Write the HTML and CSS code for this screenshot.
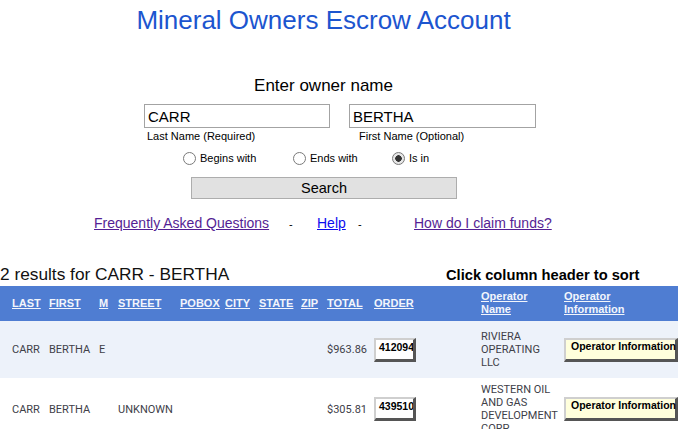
FILE: index.html
```html
<!DOCTYPE html>
<html lang="en">
<head>
  <meta charset="UTF-8">
  <meta name="viewport" content="width=device-width, initial-scale=1.0">
  <title>Mineral Owners Escrow Account</title>
  <link rel="stylesheet" href="styles.css">
</head>
<body>
  <div class="search">
    <h1 class="title">Mineral Owners Escrow Account</h1>
    <p class="prompt">Enter owner name</p>

    <div class="fields">
      <div class="field">
        <input type="text" class="name-input" value="CARR">
        <label class="hint">Last Name (Required)</label>
      </div>
      <div class="field field-first">
        <input type="text" class="name-input" value="BERTHA">
        <label class="hint">First Name (Optional)</label>
      </div>
    </div>

    <div class="modes">
      <label class="mode"><input type="radio" name="mode"> Begins with</label>
      <label class="mode"><input type="radio" name="mode"> Ends with</label>
      <label class="mode"><input type="radio" name="mode" checked> Is in</label>
    </div>

    <button class="search-btn">Search</button>

    <div class="links">
      <a href="#" class="visited">Frequently Asked Questions</a>
      <span class="dash">-</span>
      <a href="#" class="fresh">Help</a>
      <span class="dash">-</span>
      <a href="#" class="visited">How do I claim funds?</a>
    </div>
  </div>

  <div class="results-head">
    <span class="count">2 results for CARR - BERTHA</span>
    <span class="sort-note">Click column header to sort</span>
  </div>

  <table class="results">
    <colgroup>
      <col style="width:43px"><col style="width:50px"><col style="width:19px">
      <col style="width:62px"><col style="width:45px"><col style="width:34px">
      <col style="width:42px"><col style="width:26px"><col style="width:47px">
      <col style="width:107px"><col style="width:83px"><col style="width:142px">
    </colgroup>
    <thead>
      <tr>
        <th><a href="#">LAST</a></th>
        <th><a href="#">FIRST</a></th>
        <th><a href="#">M</a></th>
        <th><a href="#">STREET</a></th>
        <th><a href="#">POBOX</a></th>
        <th><a href="#">CITY</a></th>
        <th><a href="#">STATE</a></th>
        <th><a href="#">ZIP</a></th>
        <th><a href="#">TOTAL</a></th>
        <th><a href="#">ORDER</a></th>
        <th><a href="#">Operator<br>Name</a></th>
        <th><a href="#">Operator<br>Information</a></th>
      </tr>
    </thead>
    <tbody>
      <tr class="odd">
        <td>CARR</td>
        <td>BERTHA</td>
        <td>E</td>
        <td></td>
        <td></td>
        <td></td>
        <td></td>
        <td></td>
        <td>$963.86</td>
        <td><span class="order">412094</span></td>
        <td>RIVIERA<br>OPERATING<br>LLC</td>
        <td><span class="op-btn">Operator Information</span></td>
      </tr>
      <tr>
        <td>CARR</td>
        <td>BERTHA</td>
        <td></td>
        <td>UNKNOWN</td>
        <td></td>
        <td></td>
        <td></td>
        <td></td>
        <td>$305.81</td>
        <td><span class="order">439510</span></td>
        <td>WESTERN OIL<br>AND GAS<br>DEVELOPMENT<br>CORP</td>
        <td><span class="op-btn">Operator Information</span></td>
      </tr>
    </tbody>
  </table>
</body>
</html>
```

FILE: styles.css
```css
/* General Styles */
html {
  overflow: hidden;
}

body {
  font-family: 'Liberation Sans', Arial, sans-serif;
  margin: 0;
  padding: 0;
  background: #fff;
  color: #000;
}

/* Search Form */
.search {
  width: 647px;
}

.title {
  margin: 0;
  padding-top: 5px;
  font-size: 26px;
  line-height: 30px;
  font-weight: normal;
  color: #1c55cf;
  text-align: center;
}

.prompt {
  margin: 41px 0 0;
  font-size: 17px;
  line-height: 20px;
  text-align: center;
}

.fields {
  display: flex;
  gap: 19px;
  margin-top: 8px;
  padding-left: 144px;
}

.field {
  display: flex;
  flex-direction: column;
}

.name-input {
  box-sizing: border-box;
  width: 186px;
  height: 24px;
  margin: 0;
  padding: 0 3px;
  border: 1px solid #a3a3a3;
  font-family: 'Liberation Sans', Arial, sans-serif;
  font-size: 15px;
  color: #000;
}

.field-first .name-input {
  width: 187px;
}

.hint {
  margin-top: 2px;
  padding-left: 3px;
  font-size: 11px;
  line-height: 13px;
}

.field-first .hint {
  padding-left: 10px;
}

.modes {
  display: grid;
  grid-template-columns: 110px 99px auto;
  align-items: center;
  height: 16px;
  margin-top: 7px;
  padding-left: 183px;
  font-size: 11px;
}

.mode {
  display: flex;
  align-items: center;
  gap: 4px;
}

.mode input {
  appearance: none;
  box-sizing: border-box;
  width: 13px;
  height: 13px;
  margin: 0;
  border: 1px solid #7a7a7a;
  border-radius: 50%;
  background: #fff;
}

.mode input:checked {
  background: radial-gradient(circle, #333 0 3px, #e6e6e6 3.5px);
}

.search-btn {
  display: block;
  box-sizing: border-box;
  width: 266px;
  height: 22px;
  margin: 11px 0 0 191px;
  padding: 0;
  border: 1px solid #adadad;
  background: #e1e1e1;
  font-family: 'Liberation Sans', Arial, sans-serif;
  font-size: 14.5px;
  color: #000;
}

.links {
  display: grid;
  grid-template-columns: 195px 28px 41px 56px auto;
  margin-top: 16px;
  padding-left: 94px;
  font-size: 14px;
  line-height: 16px;
}

.links a.visited {
  color: #541e94;
}

.links a.fresh {
  color: #0b0bef;
}

.dash {
  font-size: 11px;
  align-self: end;
  line-height: 14px;
}

/* Results */
.results-head {
  display: grid;
  grid-template-columns: 446px auto;
  align-items: baseline;
  height: 20px;
  margin-top: 33px;
  line-height: 20px;
}

.count {
  font-size: 17.3px;
  color: #111;
}

.sort-note {
  font-size: 14.7px;
  font-weight: bold;
}

.results {
  width: 700px;
  margin-top: 2px;
  table-layout: fixed;
  border-collapse: collapse;
  font-size: 11px;
  line-height: 13px;
}

.results th {
  padding: 4px 0 5px 6px;
  background: #4f7dd2;
  text-align: left;
  vertical-align: middle;
}

.results th:first-child,
.results td:first-child {
  padding-left: 12px;
}

.results th a {
  color: #f2f5fc;
  font-weight: bold;
}

.results tbody tr {
  height: 57px;
}

.results tr.odd {
  background: #edf2fa;
}

.results td {
  padding: 5px 0 5px 6px;
  font-family: Roboto, 'Liberation Sans', Arial, sans-serif;
  color: #404048;
  vertical-align: middle;
  white-space: nowrap;
}

.order {
  display: block;
  box-sizing: border-box;
  width: 42px;
  height: 24px;
  padding: 1px 0 0 3px;
  border-style: solid;
  border-width: 2px 3px 3px 2px;
  border-color: #cfcfcf #555 #555 #cfcfcf;
  background: #fff;
  color: #000;
  font-family: 'Liberation Sans', Arial, sans-serif;
  font-size: 10.5px;
  font-weight: bold;
  overflow: hidden;
}

.op-btn {
  display: block;
  box-sizing: border-box;
  width: 114px;
  height: 24px;
  padding: 0 0 0 5px;
  border-style: solid;
  border-width: 2px 3px 3px 2px;
  border-color: #cfcfcf #555 #555 #cfcfcf;
  background: #ffffdc;
  color: #000;
  font-family: 'Liberation Sans', Arial, sans-serif;
  font-size: 10.5px;
  font-weight: bold;
}
```
